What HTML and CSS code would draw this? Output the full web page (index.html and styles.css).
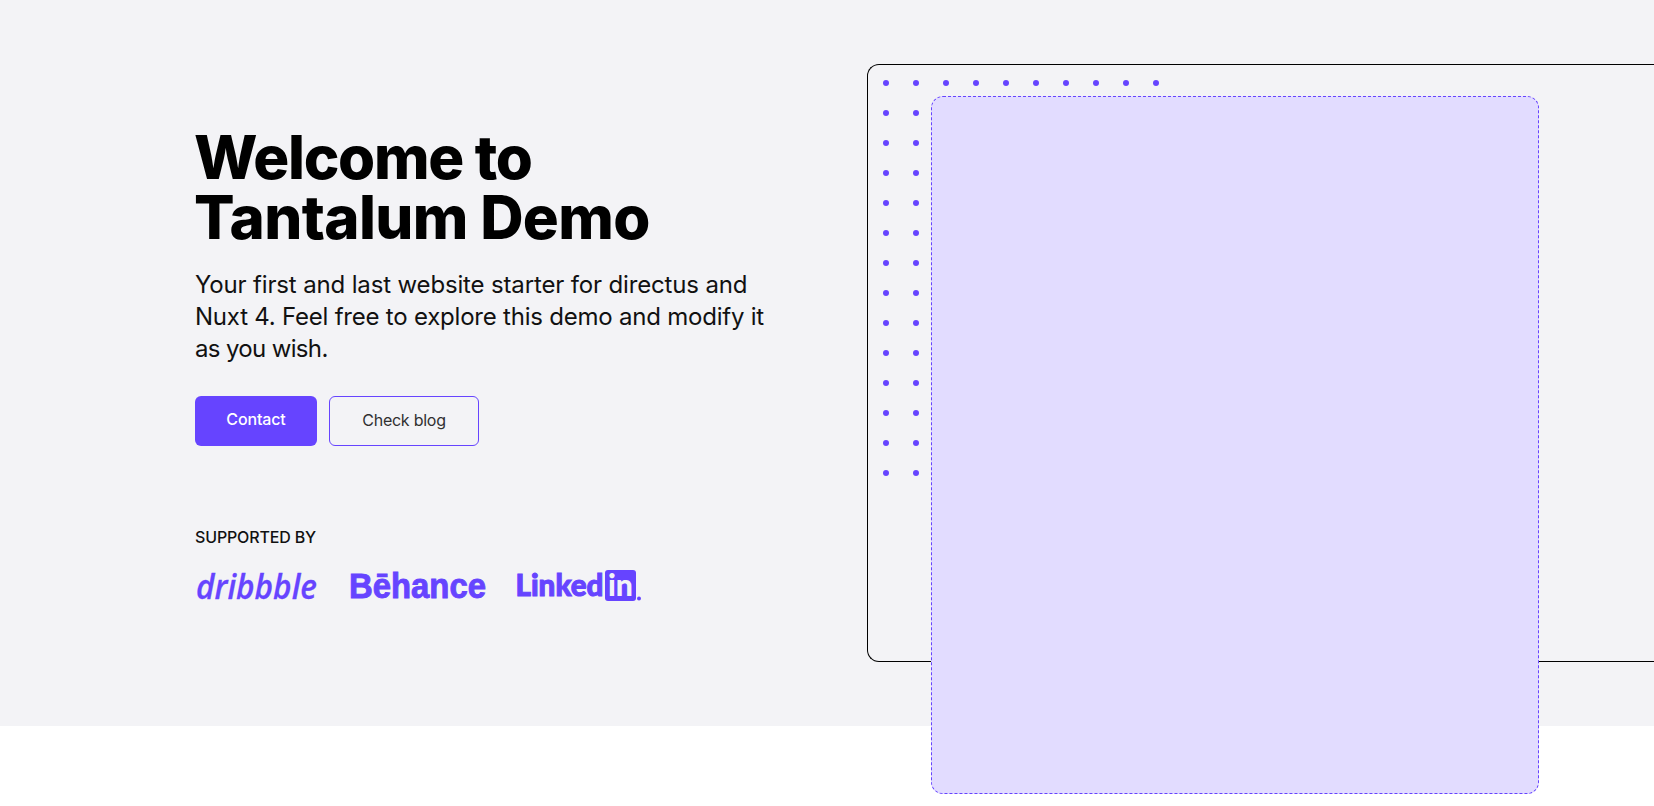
FILE: index.html
```html
<!DOCTYPE html>
<html lang="en">
<head>
<meta charset="utf-8">
<title>Tantalum Demo</title>
<link rel="stylesheet" href="styles.css">
</head>
<body>
<section class="hero">
  <div class="hero-content">
    <h1 class="title"><span class="t1">Welcome to</span> <span class="t2">Tantalum Demo</span></h1>
    <p class="lead"><span class="l1">Your first and last website starter for directus and</span> <span class="l2">Nuxt 4. Feel free to explore this demo and modify it</span> <span class="l3">as you wish.</span></p>
    <div class="actions">
      <a class="btn btn-primary">Contact</a>
      <a class="btn btn-outline">Check blog</a>
    </div>
    <p class="supported">SUPPORTED BY</p>
    <div class="logos">
      <svg class="logo" width="124" height="34" viewBox="0 0 124 34"><text class="dribbble" x="1" y="29.5" textLength="121" lengthAdjust="spacingAndGlyphs">dribbble</text></svg>
      <svg class="logo" width="137" height="34" viewBox="0 0 137 34"><text class="behance" x="-1" y="28.6" textLength="137" lengthAdjust="spacingAndGlyphs">Bēhance</text></svg>
      <svg class="logo" width="126" height="34" viewBox="0 0 126 34">
        <text class="linked" x="-1.5" y="27" textLength="88" lengthAdjust="spacingAndGlyphs">Linked</text>
        <rect class="mark" x="88" y="1" width="31" height="31" rx="3"/>
        <text class="in" x="91" y="27" textLength="25" lengthAdjust="spacingAndGlyphs">in</text>
        <circle class="mark" cx="122" cy="29.5" r="2"/>
      </svg>
    </div>
  </div>
  <div class="hero-media">
    <svg class="dots" width="300" height="420" viewBox="0 0 300 420">
      <defs><pattern id="dot" width="30" height="30" patternUnits="userSpaceOnUse"><circle class="mark" cx="3" cy="3" r="3"/></pattern></defs>
      <rect width="300" height="420" fill="url(#dot)"/>
    </svg>
    <div class="card"></div>
  </div>
</section>
</body>
</html>
```
FILE: styles.css
```css
* { box-sizing: border-box; }
body { margin: 0; min-height: 806px; background: #fff; font-family: Inter, "Liberation Sans", sans-serif; }
.hero { display: grid; grid-template-columns: 672px 1fr; height: 726px; padding: 64px 0 64px 195px; background: #f3f3f6; }
.hero-content { padding-top: 63px; white-space: nowrap; }
.title { margin: 0 0 0 -1px; font-size: 60px; line-height: 60px; font-weight: 800; color: #000; }
.title span, .lead span { display: block; }
.t1 { letter-spacing: -1.3px; }
.t2 { letter-spacing: -0.65px; }
.lead { margin: 22px 0 0; font-size: 24px; line-height: 32px; color: #111; }
.l1 { letter-spacing: -0.15px; }
.l2 { letter-spacing: -0.22px; }
.l3 { letter-spacing: -0.65px; }
.actions { display: flex; gap: 12px; margin-top: 31px; }
.btn { height: 50px; border-radius: 6px; font-size: 16px; letter-spacing: -0.15px; text-align: center; }
.btn-primary { width: 122px; line-height: 47px; background: #6644ff; color: #fff; font-weight: 500; }
.btn-outline { width: 150px; line-height: 47px; border: 1px solid #6644ff; color: #303030; letter-spacing: -0.25px; }
.supported { margin: 79px 0 0; font-size: 16px; line-height: 24px; font-weight: 500; letter-spacing: -0.15px; color: #111; }
.logos { display: flex; gap: 31px; margin-top: 20px; }
.logo { display: block; overflow: visible; fill: #6644ff; }
.logo + .logo + .logo { margin-left: -1px; }
.dribbble { font: italic 600 35px "Open Sans", sans-serif; stroke: #6644ff; stroke-width: .3px; }
.behance { font: bold 34.5px "Liberation Sans", sans-serif; stroke: #6644ff; stroke-width: .9px; }
.linked { font: 900 30px Lato, sans-serif; stroke: #6644ff; stroke-width: 1px; }
.in { font: 900 31px Lato, sans-serif; fill: #f3f3f6; }
.mark { fill: #6644ff; }
.hero-media { position: relative; border: 1px solid #000; border-right: 0; border-radius: 12px 0 0 12px; }
.dots { display: block; margin: 15px 0 0 15px; }
.card { position: absolute; left: 63px; top: 31px; width: 608px; height: 698px; border: 1px dashed #6644ff; border-radius: 12px; background: #e2dcff; }
```
